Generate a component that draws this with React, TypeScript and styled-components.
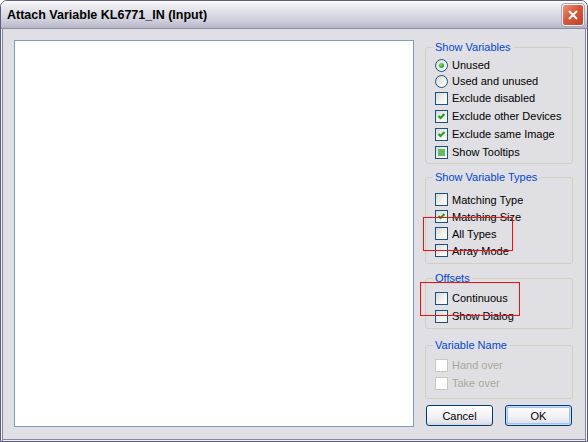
import React from 'react';
import styled, { createGlobalStyle } from 'styled-components';

const GlobalStyle = createGlobalStyle`
  html, body {
    margin: 0;
    padding: 0;
    background: #ffffff;
  }
  body {
    font-family: "Liberation Sans", Arial, sans-serif;
    font-size: 11px;
  }
`;

const Window = styled.div`
  position: relative;
  width: 588px;
  height: 442px;
  box-sizing: border-box;
  border: 1px solid #5d5d7c;
  border-radius: 7px 7px 0 0;
  background: #e0dfe3;
  display: flex;
  flex-direction: column;
  overflow: hidden;
`;

const TitleBar = styled.div`
  flex: none;
  height: 28px;
  box-sizing: border-box;
  display: flex;
  align-items: center;
  justify-content: space-between;
  padding: 0 3px 0 6px;
  background: linear-gradient(
    to bottom,
    #ffffff 0%,
    #efeff4 12%,
    #e0e0e8 40%,
    #cfcfdb 72%,
    #b6b6c8 100%
  );
  border-bottom: 1px solid #8a8aa2;
`;

const Title = styled.div`
  font-family: "Liberation Sans", Arial, sans-serif;
  font-weight: bold;
  font-size: 12.5px;
  color: #000;
  white-space: nowrap;
`;

const CloseButton = styled.div`
  width: 22px;
  height: 22px;
  box-sizing: border-box;
  border: 1px solid #f4f4f4;
  border-radius: 3px;
  background: linear-gradient(135deg, #eb9479 0%, #d8573a 45%, #c0432a 100%);
  box-shadow: 0 0 0 1px #a8a8b8;
  display: flex;
  align-items: center;
  justify-content: center;
`;

const Body = styled.div`
  flex: 1;
  display: flex;
  gap: 11px;
  padding: 11px 13px 14px;
  box-shadow:
    inset 1px 0 0 #f2f2f6,
    inset 2px 0 0 #8686a0,
    inset -1px 0 0 #f2f2f6,
    inset -2px 0 0 #8686a0,
    inset 0 -1px 0 #f2f2f6,
    inset 0 -2px 0 #8686a0;
`;

const ListBox = styled.div`
  width: 400px;
  box-sizing: border-box;
  background: #ffffff;
  border: 1px solid #7f9db9;
`;

const Side = styled.div`
  width: 148px;
  display: flex;
  flex-direction: column;
`;

const Group = styled.fieldset<{ $mt: number; $pt: number; $pb: number }>`
  margin: ${(p) => p.$mt}px 0 0;
  padding: ${(p) => p.$pt}px 0 ${(p) => p.$pb}px;
  min-width: 0;
  border: 1px solid #d0d0bf;
  border-radius: 3px;
`;

const Legend = styled.legend`
  margin-left: 7px;
  padding: 0 2px;
  line-height: 13px;
  font-size: 11px;
  color: #0046d5;
`;

const Row = styled.div<{ $h: number; $disabled?: boolean }>`
  height: ${(p) => p.$h}px;
  display: flex;
  align-items: center;
  gap: 4px;
  padding-left: 9px;
  color: ${(p) => (p.$disabled ? '#aca899' : '#000')};
  white-space: nowrap;
`;

const Box = styled.span<{ $disabled?: boolean }>`
  flex: none;
  width: 13px;
  height: 13px;
  box-sizing: border-box;
  border: 1px solid ${(p) => (p.$disabled ? '#cac8bb' : '#1c5180')};
  background: ${(p) =>
    p.$disabled ? '#ffffff' : 'linear-gradient(135deg, #d8d8d3 0%, #f4f4f2 60%, #ffffff 100%)'};
  display: flex;
  align-items: center;
  justify-content: center;
`;

const Mixed = styled.span`
  width: 7px;
  height: 7px;
  background: #62bd62;
`;

const Radio = styled.span`
  flex: none;
  width: 13px;
  height: 13px;
  box-sizing: border-box;
  border: 1px solid #1c5180;
  border-radius: 50%;
  background: linear-gradient(135deg, #d8d8d3 0%, #f4f4f2 60%, #ffffff 100%);
  display: flex;
  align-items: center;
  justify-content: center;
`;

const Dot = styled.span`
  width: 5px;
  height: 5px;
  border-radius: 50%;
  background: radial-gradient(circle at 40% 35%, #7fe07f 0%, #2aa82a 60%, #1a8a1a 100%);
`;

const Buttons = styled.div`
  margin-top: 6px;
  display: flex;
  justify-content: space-between;
  padding: 0 1px;
`;

const Button = styled.div<{ $default?: boolean }>`
  width: 67px;
  height: 21px;
  box-sizing: border-box;
  border: 1px solid #003c74;
  border-radius: 3px;
  background: linear-gradient(to bottom, #ffffff 0%, #f3f3f7 50%, #e4e4ec 85%, #d4d4de 100%);
  box-shadow: ${(p) => (p.$default ? 'inset 0 0 0 1px #c6dbf7, inset 0 0 0 2px #a7c3ee' : 'none')};
  display: flex;
  align-items: center;
  justify-content: center;
  color: #000;
  font-size: 11px;
`;

const Mark = styled.div<{ $x: number; $y: number; $w: number; $h: number }>`
  position: absolute;
  left: ${(p) => p.$x}px;
  top: ${(p) => p.$y}px;
  width: ${(p) => p.$w}px;
  height: ${(p) => p.$h}px;
  box-sizing: border-box;
  border: 1px solid #f01010;
  pointer-events: none;
`;

const Tick = () => (
  <svg width="11" height="11" viewBox="0 0 11 11">
    <path d="M2.5 5 L4.5 7 L8.5 3" fill="none" stroke="#21a121" strokeWidth="2.2" />
  </svg>
);

type Item = { label: string; h: number; state?: 'on' | 'off' | 'mixed'; radio?: boolean; disabled?: boolean };

const Check = ({ item }: { item: Item }) => {
  if (item.radio) {
    return <Radio>{item.state === 'on' && <Dot />}</Radio>;
  }
  return (
    <Box $disabled={item.disabled}>
      {item.state === 'on' && <Tick />}
      {item.state === 'mixed' && <Mixed />}
    </Box>
  );
};

const groups: { title: string; mt: number; pt: number; pb: number; items: Item[] }[] = [
  {
    title: 'Show Variables',
    mt: 1,
    pt: 3,
    pb: 2,
    items: [
      { label: 'Unused', h: 16, radio: true, state: 'on' },
      { label: 'Used and unused', h: 16, radio: true },
      { label: 'Exclude disabled', h: 18 },
      { label: 'Exclude other Devices', h: 18, state: 'on' },
      { label: 'Exclude same Image', h: 18, state: 'on' },
      { label: 'Show Tooltips', h: 18, state: 'mixed' },
    ],
  },
  {
    title: 'Show Variable Types',
    mt: 7,
    pt: 7,
    pb: 4,
    items: [
      { label: 'Matching Type', h: 17 },
      { label: 'Matching Size', h: 17, state: 'on' },
      { label: 'All Types', h: 17 },
      { label: 'Array Mode', h: 17 },
    ],
  },
  {
    title: 'Offsets',
    mt: 8,
    pt: 4,
    pb: 3,
    items: [
      { label: 'Continuous', h: 18 },
      { label: 'Show Dialog', h: 18 },
    ],
  },
  {
    title: 'Variable Name',
    mt: 10,
    pt: 4,
    pb: 6,
    items: [
      { label: 'Hand over', h: 18, disabled: true },
      { label: 'Take over', h: 18, disabled: true },
    ],
  },
];

export default function App() {
  return (
    <>
      <GlobalStyle />
      <Window>
        <TitleBar>
          <Title>Attach Variable KL6771_IN (Input)</Title>
          <CloseButton>
            <svg width="12" height="12" viewBox="0 0 12 12">
              <path d="M2 2 L10 10 M10 2 L2 10" stroke="#fff" strokeWidth="2" />
            </svg>
          </CloseButton>
        </TitleBar>
        <Body>
          <ListBox />
          <Side>
            {groups.map((g) => (
              <Group key={g.title} $mt={g.mt} $pt={g.pt} $pb={g.pb}>
                <Legend>{g.title}</Legend>
                {g.items.map((it) => (
                  <Row key={it.label} $h={it.h} $disabled={it.disabled}>
                    <Check item={it} />
                    <span>{it.label}</span>
                  </Row>
                ))}
              </Group>
            ))}
            <Buttons>
              <Button>Cancel</Button>
              <Button $default>OK</Button>
            </Buttons>
          </Side>
        </Body>
        <Mark $x={422} $y={216} $w={90} $h={34} />
        <Mark $x={419} $y={281} $w={100} $h={34} />
      </Window>
    </>
  );
}
